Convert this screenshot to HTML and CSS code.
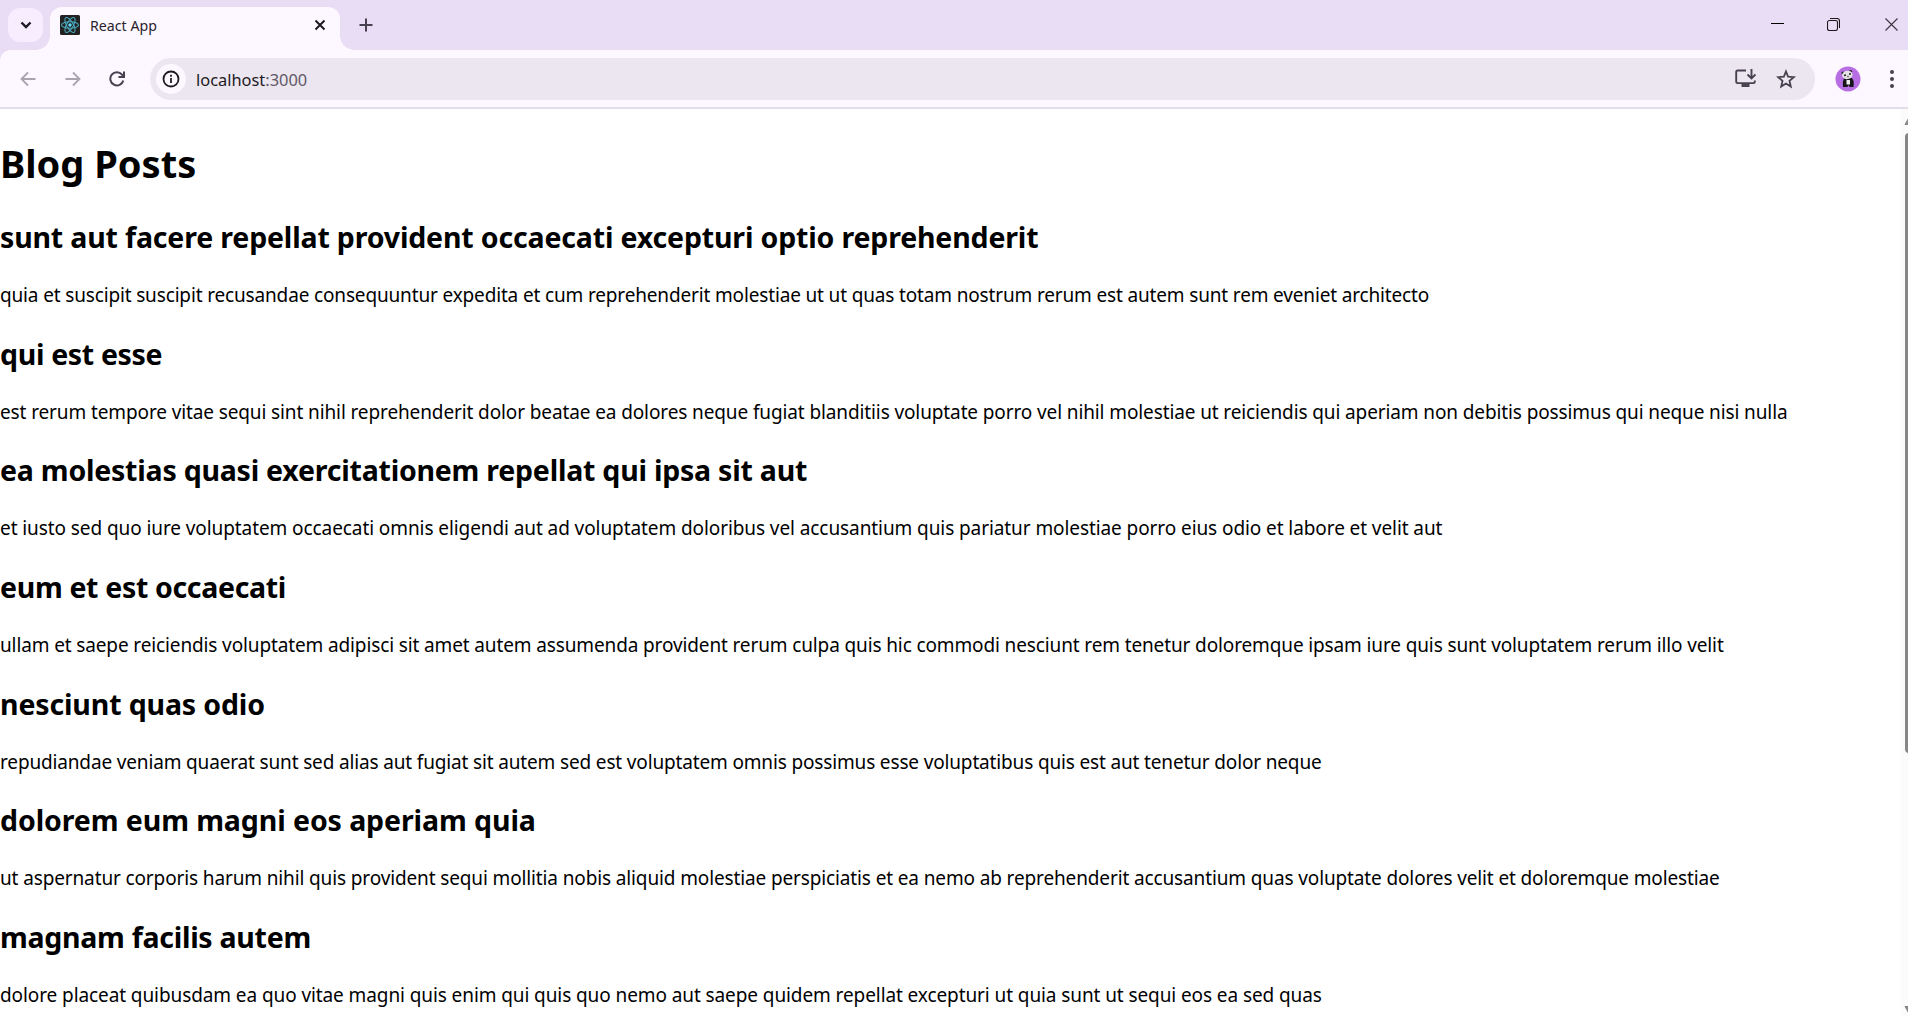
FILE: index.html
```html
<!DOCTYPE html>
<html lang="en">
<head>
<meta charset="utf-8">
<title>React App</title>
<link rel="stylesheet" href="styles.css">
</head>
<body>
<header class="chrome">
  <div class="tabstrip">
    <button class="tab-search" aria-label="Search tabs"><svg width="12" height="8" viewBox="0 0 12 8"><path d="M1.5 1.5 6 6l4.5-4.5" fill="none" stroke="#1d1a22" stroke-width="2.4"/></svg></button>
    <div class="tab">
      <svg class="favicon" width="20" height="20" viewBox="0 0 20 20"><rect width="20" height="20" rx="1.5" fill="#222"/><g fill="none" stroke="#4aa9be" stroke-width="1.1"><ellipse cx="10" cy="10" rx="8.5" ry="3.3"/><ellipse cx="10" cy="10" rx="8.5" ry="3.3" transform="rotate(60 10 10)"/><ellipse cx="10" cy="10" rx="8.5" ry="3.3" transform="rotate(120 10 10)"/></g><circle cx="10" cy="10" r="1.7" fill="#61dafb"/></svg>
      <span class="tab-title">React App</span>
      <svg class="tab-close" width="12" height="12" viewBox="0 0 12 12"><path d="M1.5 1.5l9 9m0-9l-9 9" stroke="#1d1a22" stroke-width="2"/></svg>
    </div>
    <svg class="new-tab" width="14" height="14" viewBox="0 0 14 14"><path d="M7 .5v13M.5 7h13" stroke="#48414f" stroke-width="2"/></svg>
    <div class="window-controls">
      <svg width="13" height="13" viewBox="0 0 13 13"><path d="M0 5.5h13" stroke="#000"/></svg>
      <svg class="restore" width="13" height="13" viewBox="0 0 13 13"><path d="M.5 4.5a2 2 0 0 1 2-2h6a2 2 0 0 1 2 2v6a2 2 0 0 1-2 2h-6a2 2 0 0 1-2-2zM3 .5h7a2.5 2.5 0 0 1 2.5 2.5V10" fill="none" stroke="#1a171d" stroke-width="1.1"/></svg>
      <svg width="13" height="13" viewBox="0 0 13 13"><path d="M.5.5l12 12m0-12l-12 12" stroke="#3a3440" stroke-width="1.1"/></svg>
    </div>
  </div>
  <div class="toolbar">
    <svg class="nav back" width="16" height="16" viewBox="0 0 16 16"><path d="M15.500 8H2M8 1.500 1.500 8 8 14.500" fill="none" stroke="#aaa4ae" stroke-width="1.800"/></svg>
    <svg class="nav forward" width="16" height="16" viewBox="0 0 16 16"><path d="M.5 8H14M8 1.500 14.500 8 8 14.500" fill="none" stroke="#aaa4ae" stroke-width="1.800"/></svg>
    <svg class="nav reload" width="16" height="16" viewBox="0 0 16 16"><path d="M14.300 9.500A6.600 6.600 0 1 1 13 3.600L14.500 5.500M15 .5V6H9.500" fill="none" stroke="#48414f" stroke-width="2"/></svg>
    <div class="omnibox">
      <span class="site-info"><svg width="18" height="18" viewBox="0 0 18 18"><circle cx="9" cy="9" r="7.500" fill="none" stroke="#1d1a22" stroke-width="1.800"/><path d="M9 8v5M9 4.800v2" stroke="#1d1a22" stroke-width="1.800"/></svg></span>
      <span class="url">localhost<span class="port">:3000</span></span>
      <svg class="install" width="21" height="19" viewBox="0 0 21 19"><path d="M11 1.500H2.500q-1.300 0-1.300 1.300v10q0 1.300 1.300 1.300h16q1.300 0 1.300-1.300V11.500M16.500 0v9M12.500 5.500l4 4 4-4" fill="none" stroke="#48414f" stroke-width="1.900"/><path d="M6.500 14h8v4h-8z" fill="#48414f"/></svg>
      <svg class="star" width="20" height="20" viewBox="0 0 20 20"><path d="M10 2.500l2.100 5.200 5.800.5-4.400 3.700 1.300 5.700L10 14.600l-4.800 3 1.300-5.700-4.400-3.700 5.800-.5z" fill="none" stroke="#48414f" stroke-width="1.800"/></svg>
    </div>
    <svg class="avatar" width="26" height="26" viewBox="0 0 26 26"><circle cx="13" cy="13" r="12.500" fill="#b76ee3"/><circle cx="8" cy="7" r="1.600" fill="#222"/><circle cx="15.500" cy="5.500" r="1.600" fill="#222"/><path d="M9 12h8q2.500 3 1.500 9h-4l-1-2-1 2H8q-1-5 1-9z" fill="#18151a"/><path d="M11.500 14h3.500v4.500h-3.500z" fill="#eee"/><ellipse cx="12.300" cy="9" rx="5.300" ry="4.200" transform="rotate(-10 12 9)" fill="#e4e2e5"/><path d="M9 9.500l2-.5m3-1l2 0M12.500 10.500h1" stroke="#222" stroke-width="1.500"/></svg>
    <svg class="menu" width="6" height="20" viewBox="0 0 6 20"><g fill="#48414f"><circle cx="3" cy="3" r="2"/><circle cx="3" cy="10" r="2"/><circle cx="3" cy="17" r="2"/></g></svg>
  </div>
</header>
<main class="page">
  <div class="posts">
    <h1>Blog Posts</h1>
    <h2>sunt aut facere repellat provident occaecati excepturi optio reprehenderit</h2>
    <p>quia et suscipit suscipit recusandae consequuntur expedita et cum reprehenderit molestiae ut ut quas totam nostrum rerum est autem sunt rem eveniet architecto</p>
    <h2>qui est esse</h2>
    <p>est rerum tempore vitae sequi sint nihil reprehenderit dolor beatae ea dolores neque fugiat blanditiis voluptate porro vel nihil molestiae ut reiciendis qui aperiam non debitis possimus qui neque nisi nulla</p>
    <h2>ea molestias quasi exercitationem repellat qui ipsa sit aut</h2>
    <p>et iusto sed quo iure voluptatem occaecati omnis eligendi aut ad voluptatem doloribus vel accusantium quis pariatur molestiae porro eius odio et labore et velit aut</p>
    <h2>eum et est occaecati</h2>
    <p>ullam et saepe reiciendis voluptatem adipisci sit amet autem assumenda provident rerum culpa quis hic commodi nesciunt rem tenetur doloremque ipsam iure quis sunt voluptatem rerum illo velit</p>
    <h2>nesciunt quas odio</h2>
    <p>repudiandae veniam quaerat sunt sed alias aut fugiat sit autem sed est voluptatem omnis possimus esse voluptatibus quis est aut tenetur dolor neque</p>
    <h2>dolorem eum magni eos aperiam quia</h2>
    <p>ut aspernatur corporis harum nihil quis provident sequi mollitia nobis aliquid molestiae perspiciatis et ea nemo ab reprehenderit accusantium quas voluptate dolores velit et doloremque molestiae</p>
    <h2>magnam facilis autem</h2>
    <p>dolore placeat quibusdam ea quo vitae magni quis enim qui quis quo nemo aut saepe quidem repellat excepturi ut quia sunt ut sequi eos ea sed quas</p>
  </div>
  <div class="scrollbar">
    <svg width="12" height="8" viewBox="0 0 12 8"><path d="M5 .5h2L11 7.500H1z" fill="#868686" stroke="#868686" stroke-linejoin="round"/></svg>
    <div class="thumb"></div>
    <svg class="down" width="12" height="8" viewBox="0 0 12 8"><path d="M5 7.500h2L11 .5H1z" fill="#868686" stroke="#868686" stroke-linejoin="round"/></svg>
  </div>
</main>
</body>
</html>
```
FILE: styles.css
```css
* { box-sizing: border-box; }
html, body { height: 100%; }
body { margin: 0; overflow: hidden; display: flex; flex-direction: column; background: #fff; color: #000; font-family: "Noto Sans", "Open Sans", sans-serif; }
.chrome { flex: none; background: #fdf7ff; border-bottom: 2px solid #e3dce9; }
.tabstrip { display: flex; height: 50px; background: #e9ddf5; }
.tab-search { width: 35px; height: 34px; margin: 8px 7px 0 8px; padding: 0; border: 0; border-radius: 12px; background: #f7edff; display: grid; place-items: center; }
.tab { position: relative; width: 290px; height: 43px; margin-top: 7px; padding: 0 14px 7px 10px; display: flex; align-items: center; background: #fdf7ff; border-radius: 12px 12px 0 0; }
.tab::before, .tab::after { content: ""; position: absolute; bottom: 0; width: 14px; height: 14px; }
.tab::before { right: 100%; background: radial-gradient(circle at 0 0, transparent 13.5px, #fdf7ff 14px); }
.tab::after { left: 100%; background: radial-gradient(circle at 100% 0, transparent 13.5px, #fdf7ff 14px); }
.tab-title { margin-left: 10px; font-size: 14.2px; color: #29242e; }
.tab-close { margin-left: auto; }
.new-tab { margin: 18px 0 0 19px; }
.window-controls { margin: 18px 10px 0 auto; display: flex; gap: 44px; }
.restore { margin: 0 1px 0 -1px; }
.toolbar { display: flex; align-items: center; height: 57px; padding-left: 20px; background: radial-gradient(circle at 10px 10px, #fdf7ff 9.5px, #e9ddf5 10px) 0 0 / 10px 10px no-repeat; }
.nav { margin-right: 28.5px; }
.reload { margin-right: 25px; }
.omnibox { flex: 1; display: flex; align-items: center; height: 42px; border-radius: 21px; padding-left: 6px; background: #ece6f0; }
.site-info { width: 30px; height: 30px; border-radius: 50%; background: #fdf7ff; display: grid; place-items: center; }
.url { margin-left: 10px; padding-top: 1px; font-size: 16.4px; color: #1d1a22; }
.port { color: #5f5866; }
.install { margin-left: auto; }
.star { margin: 0 19px 0 20px; }
.avatar { margin: 0 28px 0 20px; }
.menu { margin-right: 13px; }
.page { flex: 1; min-height: 0; display: flex; overflow: hidden; white-space: nowrap; }
.posts { flex: 1; min-width: 0; padding-top: 1px; }
h1 { margin: 27px 0; font-size: 38px; line-height: 53px; }
h2 { margin: 24.7px 0 25px; font-size: 28.5px; line-height: 40px; letter-spacing: -0.165px; }
p { margin: 25px 0 24.7px; font-size: 19px; line-height: 27px; letter-spacing: -0.154px; }
h2:nth-of-type(2) { letter-spacing: -0.33px; }
h2:nth-of-type(3) { letter-spacing: -0.227px; }
h2:nth-of-type(4) { letter-spacing: -0.33px; }
h2:nth-of-type(5) { letter-spacing: -0.14px; }
h2:nth-of-type(6) { letter-spacing: -0.09px; }
h2:nth-of-type(7) { letter-spacing: -0.28px; }
p:nth-of-type(2) { letter-spacing: -0.115px; }
p:nth-of-type(3) { letter-spacing: -0.085px; }
p:nth-of-type(4) { letter-spacing: -0.128px; }
p:nth-of-type(6) { letter-spacing: -0.13px; }
p:nth-of-type(7) { letter-spacing: -0.092px; }
.scrollbar { flex: none; width: 7px; padding: 8px 0 1px 4px; display: flex; flex-direction: column; background: #fbfbfb; overflow: hidden; }
.scrollbar svg { flex: none; margin-left: -1px; }
.thumb { flex: none; width: 8px; height: 620px; margin-top: 8px; border-radius: 4px; background: #868686; }
.scrollbar .down { margin-top: auto; }
```
